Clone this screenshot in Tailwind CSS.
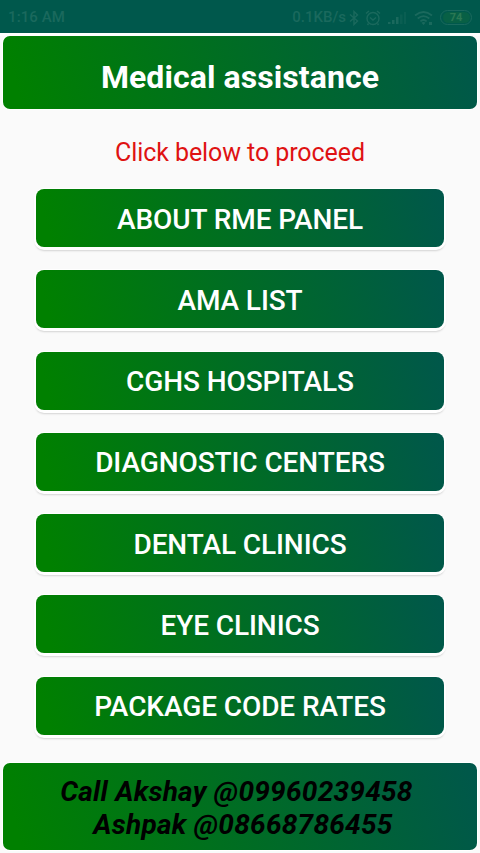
<!DOCTYPE html>
<html lang="en">
<head>
<meta charset="utf-8">
<title>Medical assistance</title>
<script src="https://cdn.jsdelivr.net/npm/@tailwindcss/browser@4"></script>
</head>
<body class="w-[480px] h-[853px] overflow-hidden bg-[#fafafa] font-[Roboto,sans-serif] flex flex-col">
<header class="h-[33px] shrink-0 bg-[#00584c] text-[#1a695d] flex items-center pl-2 pr-[8px] pt-[2px] text-[15px] font-medium">
  <span class="tracking-[0.1px]">1:16 AM</span>
  <span class="ml-auto">0.1KB/s</span>
  <svg class="w-[10px] h-4 ml-[3px]" viewBox="0 0 10 16" fill="none" stroke="currentColor" stroke-width="1.4"><path d="M1 4.5 8.5 11 5 14.5V1.5L8.5 5 1 11.5"/></svg>
  <svg class="w-4 h-4 ml-[6px]" viewBox="0 0 16 16" fill="none" stroke="currentColor" stroke-width="1.4"><circle cx="8" cy="8.5" r="6"/><path d="M5 7.5 8 10l3-2.500M1 3.500 4 1M15 3.500 12 1M3.500 13.500 2.500 15M12.500 13.500l1 1.500"/></svg>
  <svg class="w-[18px] h-4 ml-[7px]" viewBox="0 0 18 16" fill="currentColor"><path d="M0 12h2.500v2H0zM4 10h2.500v4H4zM8 7h2.500v7H8z"/><path opacity=".4" d="M12 4.500h2.500V14H12zM16 2h2v12h-2z"/></svg>
  <svg class="w-[19px] h-4 ml-[8px]" viewBox="0 0 19 16" fill="none" stroke="currentColor" stroke-width="1.700"><path d="M1 5.500Q9.500-1.500 18 5.500M3.700 8.500Q9.500 3.700 15.300 8.500M6.400 11.300Q9.500 8.700 12.600 11.300"/><path fill="currentColor" stroke="none" d="m7.500 12.800 2 2.200 2-2.200q-2-1.500-4 0zM15 12h3v3h-3z"/></svg>
  <span class="ml-[7px] w-[32px] h-[15px] rounded-full border border-[#1a695d] flex items-center justify-center"><span class="w-[27px] h-[11px] rounded-full bg-[#086045] text-[#2b7854] text-[11px] leading-[11px] font-bold text-center">74</span></span>
</header>
<div class="h-[3px] shrink-0 bg-white"></div>
<h1 class="mx-[3px] h-[73px] shrink-0 rounded-[7px] bg-[linear-gradient(73deg,#008000_4%,#00574b)] shadow-[0_0_0_1px_#ffffff] text-white text-[32px] tracking-[0.08px] font-bold flex items-center justify-center pt-[9px]"><span>Medical assistance</span></h1>
<p class="h-[80px] shrink-0 flex items-center justify-center pt-[8px] text-[#df1212] text-[25px] tracking-[-0.08px]"><span>Click below to proceed</span></p>
<main class="mx-9 flex flex-col gap-[23.25px] text-white text-[28px] tracking-[-0.09px] font-medium">
  <button class="h-[58px] rounded-[8px] bg-[linear-gradient(73deg,#008000_4%,#00574b)] shadow-[0_1px_0_2px_#ffffff,0_3px_2px_1px_#00000028] pt-[3px]">ABOUT RME PANEL</button>
  <button class="h-[58px] rounded-[8px] bg-[linear-gradient(73deg,#008000_4%,#00574b)] shadow-[0_1px_0_2px_#ffffff,0_3px_2px_1px_#00000028] pt-[3px]">AMA LIST</button>
  <button class="h-[58px] rounded-[8px] bg-[linear-gradient(73deg,#008000_4%,#00574b)] shadow-[0_1px_0_2px_#ffffff,0_3px_2px_1px_#00000028] pt-[3px]">CGHS HOSPITALS</button>
  <button class="h-[58px] rounded-[8px] bg-[linear-gradient(73deg,#008000_4%,#00574b)] shadow-[0_1px_0_2px_#ffffff,0_3px_2px_1px_#00000028] pt-[3px]">DIAGNOSTIC CENTERS</button>
  <button class="h-[58px] rounded-[8px] bg-[linear-gradient(73deg,#008000_4%,#00574b)] shadow-[0_1px_0_2px_#ffffff,0_3px_2px_1px_#00000028] pt-[3px]">DENTAL CLINICS</button>
  <button class="h-[58px] rounded-[8px] bg-[linear-gradient(73deg,#008000_4%,#00574b)] shadow-[0_1px_0_2px_#ffffff,0_3px_2px_1px_#00000028] pt-[3px]">EYE CLINICS</button>
  <button class="h-[58px] rounded-[8px] bg-[linear-gradient(73deg,#008000_4%,#00574b)] shadow-[0_1px_0_2px_#ffffff,0_3px_2px_1px_#00000028] pt-[3px]">PACKAGE CODE RATES</button>
</main>
<footer class="mx-[3px] mt-auto mb-[3px] h-[87px] shrink-0 rounded-[7px] bg-[linear-gradient(73deg,#008000_4%,#00574b)] shadow-[0_0_0_1px_#ffffff] text-black text-[28px] tracking-[0.26px] leading-[33px] font-bold italic text-center pt-[12px]">
  <div class="pr-[7px]">Call Akshay @09960239458</div>
  <div class="pl-[6px]">Ashpak @08668786455</div>
</footer>
</body>
</html>
